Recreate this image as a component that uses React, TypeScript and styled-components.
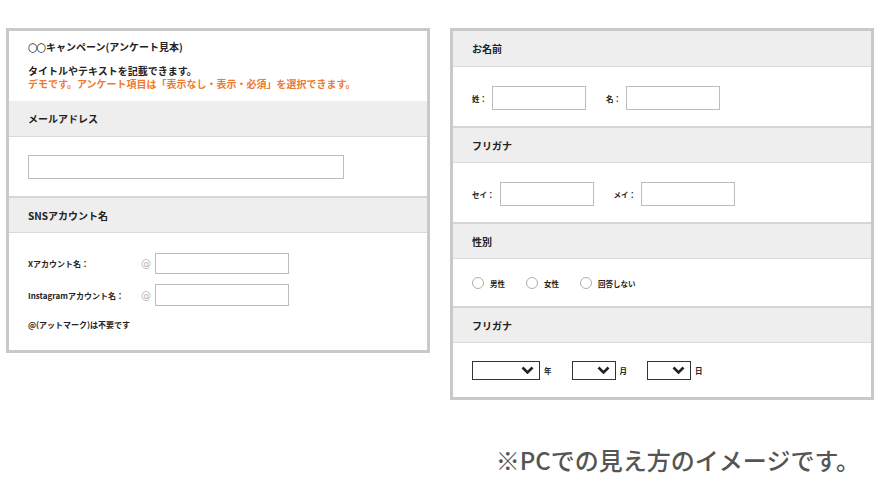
import React from "react";
import styled, { createGlobalStyle } from "styled-components";

const Global = createGlobalStyle`
  html, body { margin: 0; padding: 0; background: #fff; }
  body { font-family: "Noto Sans CJK JP", "Noto Sans", sans-serif; color: #222; }
  * { box-sizing: border-box; }
`;

const Page = styled.div`
  width: 882px;
  height: 494px;
  padding: 28px 0 0 6px;
  display: flex;
  flex-direction: column;
`;

const Panels = styled.div`
  display: flex;
  align-items: flex-start;
  gap: 20px;
`;

const Panel = styled.div`
  width: 424px;
  border: 3px solid #c9c9c9;
  background: #fff;
  display: flex;
  flex-direction: column;
`;

const Intro = styled.div`
  padding: 9px 19px 11px;
  display: flex;
  flex-direction: column;
`;

const Title = styled.div`
  font-size: 10px;
  font-weight: 700;
  line-height: 14px;
  margin-bottom: 11px;
  display: flex;
  align-items: center;
`;

const Circles = styled.span`
  font-weight: 400;
  font-family: "DejaVu Sans", sans-serif;
  font-size: 11.5px;
  letter-spacing: -1.5px;
  margin-right: 1px;
`;

const IntroLine = styled.div<{ $accent?: boolean }>`
  font-size: 10px;
  font-weight: 700;
  line-height: 12.5px;
  white-space: nowrap;
  color: ${(p) => (p.$accent ? "#ee7a30" : "#222")};
`;

const Header = styled.div<{ $divider?: boolean }>`
  height: ${(p) => (p.$divider ? 37 : 36)}px;
  background: #eeeeee;
  border-top: ${(p) => (p.$divider ? "2px solid #d6d6d6" : "none")};
  border-bottom: 1px solid #dadada;
  padding: 0 19px;
  display: flex;
  align-items: center;
  font-size: 10px;
  font-weight: 700;
`;

const Body = styled.div<{ $h: number; $pt: number }>`
  height: ${(p) => p.$h}px;
  padding: ${(p) => p.$pt}px 19px 0;
  display: flex;
  flex-direction: column;
`;

const TextInput = styled.div<{ $w: number; $h: number }>`
  width: ${(p) => p.$w}px;
  height: ${(p) => p.$h}px;
  border: 1px solid #bdbdbd;
  background: #fff;
`;

const Row = styled.div<{ $gap?: number }>`
  display: flex;
  align-items: center;
  margin-bottom: ${(p) => p.$gap ?? 0}px;
`;

const SnsLabel = styled.div`
  width: 113px;
  font-size: 8px;
  font-weight: 700;
  white-space: nowrap;
`;

const At = styled.div`
  width: 14px;
  font-size: 10px;
  color: #b5b5b5;
  font-family: "DejaVu Sans", sans-serif;
`;

const Note = styled.div`
  font-size: 8px;
  font-weight: 700;
  margin-top: 13px;
`;

const Field = styled.div`
  display: flex;
  align-items: center;
  gap: 5px;
  margin-right: 20px;
`;

const SmallLabel = styled.div`
  font-size: 7.5px;
  font-weight: 700;
  white-space: nowrap;
`;

const RadioItem = styled.div`
  display: flex;
  align-items: center;
  gap: 6px;
  margin-right: 21px;
`;

const RadioCircle = styled.span`
  width: 12px;
  height: 12px;
  border-radius: 50%;
  border: 1px solid #b0b0b0;
  background: #fff;
`;

const SelectBox = styled.div<{ $w: number }>`
  width: ${(p) => p.$w}px;
  height: 19px;
  border: 1px solid #333;
  display: flex;
  align-items: center;
  justify-content: flex-end;
  padding-right: 5px;
`;

const DateField = styled.div`
  display: flex;
  align-items: center;
  gap: 4px;
  margin-right: 20px;
`;

const Footer = styled.div`
  margin-top: 44px;
  padding-right: 22px;
  text-align: right;
  font-size: 24px;
  font-weight: 500;
  color: #555;
  line-height: 32px;
`;

const Chevron = () => (
  <svg width="13" height="9" viewBox="0 0 13 9">
    <path d="M1.5 1.5 L6.5 6.5 L11.5 1.5" fill="none" stroke="#222" strokeWidth="2.6" />
  </svg>
);

export default function App() {
  return (
    <>
      <Global />
      <Page>
        <Panels>
          <Panel>
            <Intro>
              <Title>
                <Circles>○○</Circles>キャンペーン(アンケート見本)
              </Title>
              <IntroLine>タイトルやテキストを記載できます。</IntroLine>
              <IntroLine $accent>デモです。アンケート項目は「表示なし・表示・必須」を選択できます。</IntroLine>
            </Intro>
            <Header>メールアドレス</Header>
            <Body $h={59} $pt={18}>
              <TextInput $w={316} $h={24} />
            </Body>
            <Header $divider>SNSアカウント名</Header>
            <Body $h={117} $pt={20}>
              <Row $gap={10}>
                <SnsLabel>Xアカウント名：</SnsLabel>
                <At>@</At>
                <TextInput $w={134} $h={21} />
              </Row>
              <Row>
                <SnsLabel>Instagramアカウント名：</SnsLabel>
                <At>@</At>
                <TextInput $w={134} $h={22} />
              </Row>
              <Note>@(アットマーク)は不要です</Note>
            </Body>
          </Panel>
          <Panel>
            <Header>お名前</Header>
            <Body $h={59} $pt={19}>
              <Row>
                <Field>
                  <SmallLabel>姓：</SmallLabel>
                  <TextInput $w={94} $h={24} />
                </Field>
                <Field>
                  <SmallLabel>名：</SmallLabel>
                  <TextInput $w={94} $h={24} />
                </Field>
              </Row>
            </Body>
            <Header $divider>フリガナ</Header>
            <Body $h={59} $pt={19}>
              <Row>
                <Field>
                  <SmallLabel>セイ：</SmallLabel>
                  <TextInput $w={94} $h={24} />
                </Field>
                <Field>
                  <SmallLabel>メイ：</SmallLabel>
                  <TextInput $w={94} $h={24} />
                </Field>
              </Row>
            </Body>
            <Header $divider>性別</Header>
            <Body $h={47} $pt={18}>
              <Row>
                <RadioItem>
                  <RadioCircle />
                  <SmallLabel>男性</SmallLabel>
                </RadioItem>
                <RadioItem>
                  <RadioCircle />
                  <SmallLabel>女性</SmallLabel>
                </RadioItem>
                <RadioItem>
                  <RadioCircle />
                  <SmallLabel>回答しない</SmallLabel>
                </RadioItem>
              </Row>
            </Body>
            <Header $divider>フリガナ</Header>
            <Body $h={54} $pt={18}>
              <Row>
                <DateField>
                  <SelectBox $w={68}>
                    <Chevron />
                  </SelectBox>
                  <SmallLabel>年</SmallLabel>
                </DateField>
                <DateField>
                  <SelectBox $w={44}>
                    <Chevron />
                  </SelectBox>
                  <SmallLabel>月</SmallLabel>
                </DateField>
                <DateField>
                  <SelectBox $w={44}>
                    <Chevron />
                  </SelectBox>
                  <SmallLabel>日</SmallLabel>
                </DateField>
              </Row>
            </Body>
          </Panel>
        </Panels>
        <Footer>※PCでの見え方のイメージです。</Footer>
      </Page>
    </>
  );
}
